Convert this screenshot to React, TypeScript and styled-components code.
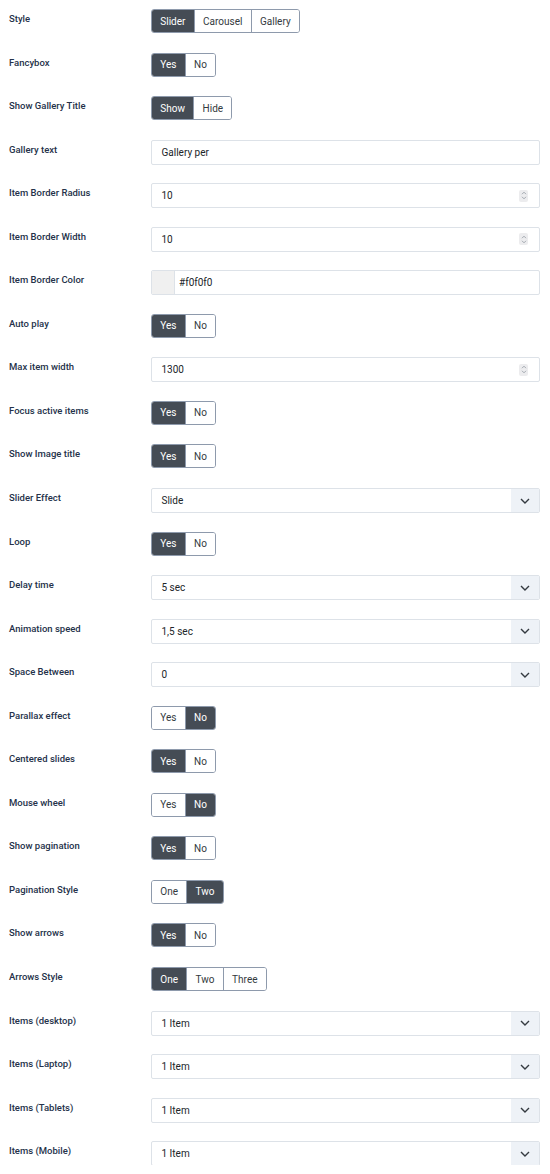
import React from 'react';
import styled, { createGlobalStyle } from 'styled-components';

const GlobalStyle = createGlobalStyle`
  body {
    margin: 0;
    background: #ffffff;
    font-family: Roboto, "Liberation Sans", Arial, sans-serif;
    color: #1f2a3a;
  }
`;

const Form = styled.div`
  display: flex;
  flex-direction: column;
  gap: 19.55px;
  padding: 9px 10px 0 9px;
`;

const Row = styled.div`
  display: flex;
  align-items: flex-start;
  height: 24px;
`;

const Label = styled.div`
  width: 142px;
  flex-shrink: 0;
  padding-top: 3px;
  font-size: 9.5px;
  line-height: 14px;
  font-weight: 500;
  color: #25324a;
`;

const Control = styled.div`
  flex: 1;
  display: flex;
`;

const Group = styled.div`
  display: inline-flex;
  height: 24px;
  border: 1px solid #8e9aac;
  border-radius: 3px;
  overflow: hidden;
  box-sizing: border-box;
`;

const Segment = styled.div<{ $active?: boolean }>`
  display: flex;
  align-items: center;
  padding: 0 8.3px;
  font-size: 10px;
  color: ${(p) => (p.$active ? '#ffffff' : '#343a40')};
  background: ${(p) => (p.$active ? '#454c55' : '#ffffff')};
  & + & {
    border-left: 1px solid #8e9aac;
  }
`;

const Field = styled.div`
  flex: 1;
  height: 25px;
  box-sizing: border-box;
  border: 1px solid #dde2e8;
  border-radius: 2px;
  display: flex;
  align-items: center;
  font-size: 10px;
  color: #212529;
  overflow: hidden;
`;

const Value = styled.span`
  flex: 1;
  padding-left: 9.5px;
`;

const Spinner = styled.div`
  width: 9px;
  height: 12px;
  margin-right: 11px;
  border-radius: 2px;
  background: #ececee;
  display: flex;
  align-items: center;
  justify-content: center;
`;

const Swatch = styled.div`
  width: 22px;
  align-self: stretch;
  background: #f0f0f0;
  border-right: 1px solid #dde2e8;
`;

const SwatchValue = styled.span`
  padding-left: 4px;
`;

const Caret = styled.div`
  width: 28px;
  align-self: stretch;
  background: #eef2f7;
  display: flex;
  align-items: center;
  justify-content: center;
`;

type Item =
  | { label: string; kind: 'group'; options: string[]; active: number }
  | { label: string; kind: 'text' | 'number' | 'select' | 'color'; value: string };

const yn = (label: string, active = 0): Item => ({ label, kind: 'group', options: ['Yes', 'No'], active });

const items: Item[] = [
  { label: 'Style', kind: 'group', options: ['Slider', 'Carousel', 'Gallery'], active: 0 },
  yn('Fancybox'),
  { label: 'Show Gallery Title', kind: 'group', options: ['Show', 'Hide'], active: 0 },
  { label: 'Gallery text', kind: 'text', value: 'Gallery per' },
  { label: 'Item Border Radius', kind: 'number', value: '10' },
  { label: 'Item Border Width', kind: 'number', value: '10' },
  { label: 'Item Border Color', kind: 'color', value: '#f0f0f0' },
  yn('Auto play'),
  { label: 'Max item width', kind: 'number', value: '1300' },
  yn('Focus active items'),
  yn('Show Image title'),
  { label: 'Slider Effect', kind: 'select', value: 'Slide' },
  yn('Loop'),
  { label: 'Delay time', kind: 'select', value: '5 sec' },
  { label: 'Animation speed', kind: 'select', value: '1,5 sec' },
  { label: 'Space Between', kind: 'select', value: '0' },
  yn('Parallax effect', 1),
  yn('Centered slides'),
  yn('Mouse wheel', 1),
  yn('Show pagination'),
  { label: 'Pagination Style', kind: 'group', options: ['One', 'Two'], active: 1 },
  yn('Show arrows'),
  { label: 'Arrows Style', kind: 'group', options: ['One', 'Two', 'Three'], active: 0 },
  { label: 'Items (desktop)', kind: 'select', value: '1 Item' },
  { label: 'Items (Laptop)', kind: 'select', value: '1 Item' },
  { label: 'Items (Tablets)', kind: 'select', value: '1 Item' },
  { label: 'Items (Mobile)', kind: 'select', value: '1 Item' },
];

const SpinIcon = () => (
  <svg width="6" height="9" viewBox="0 0 6 9" fill="none" stroke="#9aa0a8" strokeWidth="0.9">
    <path d="M1 3.2 L3 1.2 L5 3.2" />
    <path d="M1 5.8 L3 7.8 L5 5.8" />
  </svg>
);

const Chevron = () => (
  <svg width="10" height="6" viewBox="0 0 10 6" fill="none" stroke="#343a40" strokeWidth="1.4">
    <path d="M1 1 L5 5 L9 1" />
  </svg>
);

function renderControl(item: Item) {
  if (item.kind === 'group') {
    return (
      <Group>
        {item.options.map((o, i) => (
          <Segment key={o} $active={i === item.active}>
            {o}
          </Segment>
        ))}
      </Group>
    );
  }
  if (item.kind === 'color') {
    return (
      <Field>
        <Swatch />
        <SwatchValue>{item.value}</SwatchValue>
      </Field>
    );
  }
  return (
    <Field>
      <Value>{item.value}</Value>
      {item.kind === 'number' && (
        <Spinner>
          <SpinIcon />
        </Spinner>
      )}
      {item.kind === 'select' && (
        <Caret>
          <Chevron />
        </Caret>
      )}
    </Field>
  );
}

function App() {
  return (
    <>
      <GlobalStyle />
      <Form>
        {items.map((item) => (
          <Row key={item.label}>
            <Label>{item.label}</Label>
            <Control>{renderControl(item)}</Control>
          </Row>
        ))}
      </Form>
    </>
  );
}

export default App;
